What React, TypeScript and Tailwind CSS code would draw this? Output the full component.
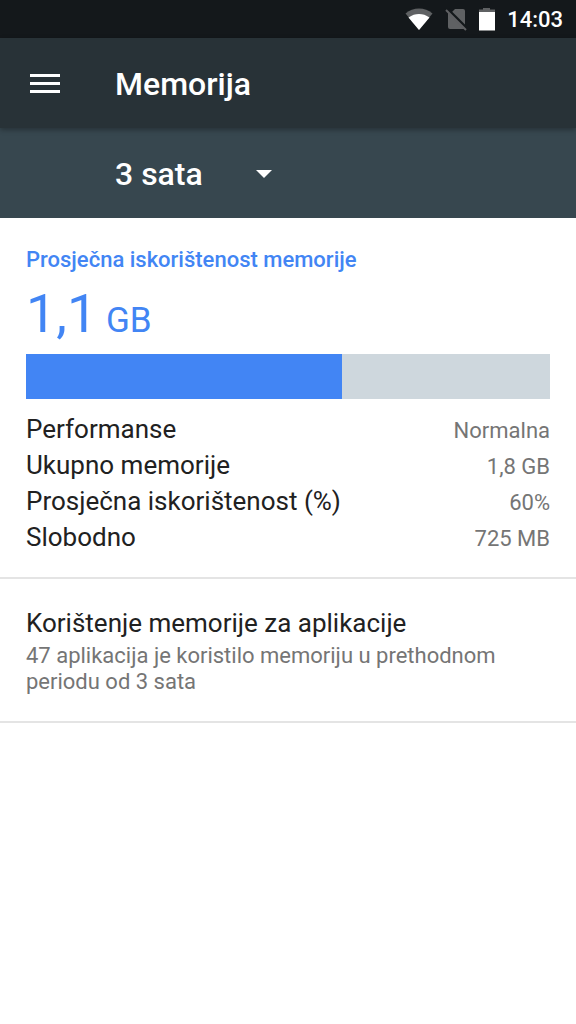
import { useState } from "react";

const periods = ["3 sata", "6 sati", "12 sati", "1 dan"];

const stats = [
  { label: "Performanse", value: "Normalna" },
  { label: "Ukupno memorije", value: "1,8 GB" },
  { label: "Prosječna iskorištenost (%)", value: "60%" },
  { label: "Slobodno", value: "725 MB" },
];

const usedPercent = 60.4;

function StatusBar() {
  return (
    <div className="flex h-[38px] items-center justify-end bg-[#14181b] pt-0.5 pr-[13px] text-white">
      <svg className="mr-3 h-6 w-7" viewBox="0 0 28 24" aria-hidden="true">
        <path d="M0.5 5.5C4.5 2.3 9 .5 14 .5s9.500 1.800 13.500 5L14 22z" fill="#5f6163" />
        <path d="M3.500 9.500C7 7 10.300 6 14 6s7 1 10.500 3.500L14 22z" fill="#fff" />
      </svg>
      <svg className="mr-3 h-6 w-[22px]" viewBox="0 0 22 24" aria-hidden="true">
        <path d="M10 1h8a2 2 0 0 1 2 2v15L6.500 4.500z" fill="#5f6163" />
        <path d="M3 4.500L19.500 21H5a2 2 0 0 1-2-2z" fill="#5f6163" />
        <path d="M3 1l20 20" stroke="#14181b" strokeWidth="2" />
        <path d="M1 2l20 20" stroke="#5f6163" strokeWidth="2" />
      </svg>
      <svg className="mr-3 h-6 w-4" viewBox="0 0 16 24" aria-hidden="true">
        <path d="M4 0h7v2H4zM0 1.500h16v3H0z" fill="#5f6163" />
        <path d="M0 4h16v18.500H0z" fill="#fff" />
      </svg>
      <span className="text-[22px] leading-6 font-medium">14:03</span>
    </div>
  );
}

export default function App() {
  const [period, setPeriod] = useState(periods[0]);

  return (
    <div className="min-h-screen bg-white font-[Roboto,sans-serif] text-[#212121]">
      <StatusBar />

      <header className="relative flex h-[90px] items-center bg-[#283237] pt-0.5 pl-[30px] text-white shadow-[0_2px_5px_rgba(0,0,0,0.3)]">
        <button type="button" aria-label="Meni" className="mr-[55px]">
          <svg className="h-5 w-[30px]" viewBox="0 0 30 20" aria-hidden="true">
            <path d="M0 0h30v3H0zM0 8h30v3H0zM0 16h30v3H0z" fill="currentColor" />
          </svg>
        </button>
        <h1 className="text-[32px] leading-10 font-medium">Memorija</h1>
      </header>

      <div className="flex h-[90px] items-center bg-[#37474f] pt-0.5 pl-[115px] text-white">
        <div className="relative">
          <select
            aria-label="Period"
            className="w-[157px] appearance-none bg-transparent text-[32px] leading-10 font-medium"
            value={period}
            onChange={(e) => setPeriod(e.target.value)}
          >
            {periods.map((p) => (
              <option key={p} value={p}>
                {p}
              </option>
            ))}
          </select>
          <svg
            className="pointer-events-none absolute top-4 right-0 h-2 w-4"
            viewBox="0 0 16 8"
            aria-hidden="true"
          >
            <path d="M0 0h16L8 8z" fill="currentColor" />
          </svg>
        </div>
      </div>

      <main>
        <section className="border-b-2 border-[#e4e4e4] px-[26px] pt-7 pb-[22px]">
          <h2 className="text-[22px] leading-7 font-medium text-[#4285f4]">
            Prosječna iskorištenost memorije
          </h2>
          <p className="pt-1 text-[54px] leading-[72px] text-[#4285f4]">
            1,1<span className="text-[35px] leading-10"> GB</span>
          </p>
          <div className="mt-1 h-[45px] bg-[#ced7dd]">
            <div className="h-full bg-[#4285f4]" style={{ width: `${usedPercent}%` }} />
          </div>
          <dl className="mt-3">
            {stats.map((s) => (
              <div key={s.label} className="flex h-9 items-baseline justify-between leading-9">
                <dt className="text-[26px]">{s.label}</dt>
                <dd className="text-[22px] text-[#757575]">{s.value}</dd>
              </div>
            ))}
          </dl>
        </section>

        <a href="#aplikacije" className="block border-b-2 border-[#e4e4e4] px-[26px] py-[26px]">
          <h2 className="text-[26px] leading-9">Korištenje memorije za aplikacije</h2>
          <p className="mt-0.5 text-[22px] leading-[26px] text-[#757575]">
            47 aplikacija je koristilo memoriju u prethodnom periodu od 3 sata
          </p>
        </a>
      </main>
    </div>
  );
}
